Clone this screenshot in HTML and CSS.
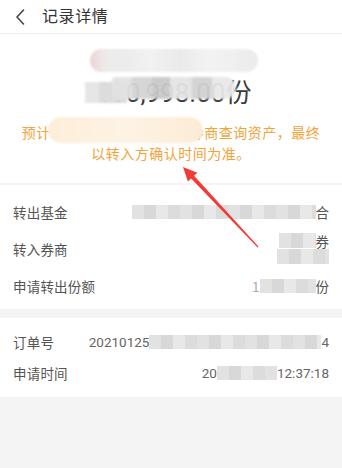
FILE: index.html
```html
<!DOCTYPE html>
<html lang="zh-CN">
<head>
    <meta charset="UTF-8">
    <meta name="viewport" content="width=device-width, initial-scale=1.0">
    <title>记录详情</title>
    <link rel="stylesheet" href="styles.css">
</head>
<body>
    <div class="page">
        <div class="header">
            <svg class="back" width="10" height="16" viewBox="0 0 10 16">
                <path d="M8.5 1 L2 8 L8.5 15" fill="none" stroke="#444" stroke-width="1.6" stroke-linecap="round" stroke-linejoin="round"/>
            </svg>
            <span class="title">记录详情</span>
        </div>

        <div class="hero">
            <div class="amount">100,998.00份</div>
            <div class="notice">预计3个交易日后可在转入券商查询资产，最终<br>以转入方确认时间为准。</div>

            <!-- masked areas -->
            <div class="mask mask-top"></div>
            <div class="mask mask-lead"></div>
            <div class="mask mask-amount"></div>
            <div class="mask mask-notice"></div>
        </div>

        <div class="card first">
            <div class="row">
                <span class="label">转出基金</span>
                <span class="value"><span class="mosaic w-fund"></span>合</span>
            </div>
            <div class="row">
                <span class="label">转入券商</span>
                <span class="value two-line">
                    <span class="line"><span class="mosaic w-broker"></span>券</span>
                    <span class="line"><span class="mosaic w-broker2"></span></span>
                </span>
            </div>
            <div class="row">
                <span class="label">申请转出份额</span>
                <span class="value"><span class="faint">1</span><span class="mosaic w-share"></span>份</span>
            </div>
        </div>

        <div class="card second">
            <div class="row short">
                <span class="label">订单号</span>
                <span class="value num">20210125<span class="mosaic w-order"></span>4</span>
            </div>
            <div class="row short">
                <span class="label">申请时间</span>
                <span class="value num">20<span class="mosaic w-time"></span>12:37:18</span>
            </div>
        </div>

        <!-- red annotation arrow -->
        <svg class="arrow" width="342" height="468" viewBox="0 0 342 468">
            <polygon points="183,167 197.3,172.8 194.1,175.8 258.4,246.6 257.6,247.4 191.1,178.6 187.9,181.6" fill="#f23b36"/>
        </svg>
    </div>
</body>
</html>
```

FILE: styles.css
```css
body {
    margin: 0;
    background-color: #f4f4f4;
    font-family: "Noto Sans CJK SC", "Noto Sans", sans-serif;
    color: #333;
}

.page {
    position: relative;
    width: 342px;
    min-height: 468px;
}

.header {
    height: 33px;
    display: flex;
    align-items: center;
    padding-left: 15px;
    background-color: white;
    border-bottom: 1px solid #ececec;
}

.back {
    margin-right: 17px;
}

.title {
    font-size: 16px;
    letter-spacing: 0.6px;
    color: #333;
    margin-top: -4px;
}

.hero {
    position: relative;
    background-color: white;
    padding: 42px 0 19px;
    margin-bottom: 2px;
    text-align: center;
}

.amount {
    font-family: Roboto, "Noto Sans CJK SC", sans-serif;
    font-size: 26px;
    line-height: 34px;
    color: #3a3a3a;
    margin-bottom: 12px;
    padding-left: 6px;
}

.notice {
    font-size: 14px;
    letter-spacing: 0.5px;
    line-height: 21px;
    color: #f2a33a;
}

.mask {
    position: absolute;
    filter: blur(1px);
}

.mask-top {
    left: 90px;
    top: 15px;
    width: 168px;
    height: 23px;
    border-radius: 12px;
    background: linear-gradient(90deg, #ebd3d3 0, #eeeaea 14px, #ededed 40px, #f1f1f1 60px, #eaeaea 90px, #f3f3f3 120px, #ebebeb 168px);
}

.mask-lead {
    left: 85px;
    top: 48px;
    width: 42px;
    height: 21px;
    background: linear-gradient(90deg, #e6e6e6 0 14px, #dcdcdc 14px 42px);
}

.mask-amount {
    left: 112px;
    top: 43px;
    width: 124px;
    height: 22px;
    border-radius: 4px 12px 12px 4px;
    opacity: 0.95;
    background: linear-gradient(90deg, #e2e2e2 0 20px, #d4d4d4 20px 40px, #c9c9c9 40px 58px, #e4e4e4 58px 80px, #d2d2d2 80px 100px, #e8e8e8 100px 124px);
}

.mask-notice {
    left: 48px;
    top: 83px;
    width: 155px;
    height: 26px;
    border-radius: 13px;
    background: linear-gradient(90deg, #fdeed9, #fdf3e4 50%, #fcecd6);
}

.card {
    background-color: white;
}

.card.first {
    padding: 8px 0 5px;
    margin-bottom: 9px;
}

.card.second {
    padding: 8px 0 9px;
}

.row {
    height: 37px;
    display: flex;
    align-items: center;
    justify-content: space-between;
    padding: 0 13px;
}

.row.short {
    height: 31px;
}

.label {
    font-size: 13.5px;
    letter-spacing: 0.2px;
    color: #555;
}

.value {
    display: flex;
    align-items: center;
    font-size: 13.5px;
    color: #555;
}

.value.num {
    font-family: Roboto, "Noto Sans CJK SC", sans-serif;
    color: #666;
}

.value.two-line {
    flex-direction: column;
    align-items: flex-end;
}

.line {
    display: flex;
    align-items: center;
    height: 16px;
}

.faint {
    color: #aaa;
}

.mosaic {
    display: inline-block;
    height: 14px;
    filter: blur(0.6px);
    background: repeating-linear-gradient(90deg, #e2e2e2 0 12px, #d8d8d8 12px 24px, #e8e8e8 24px 36px, #dcdcdc 36px 48px);
}

.w-fund { width: 184px; }
.w-broker { width: 37px; height: 15px; }
.w-broker2 { width: 52px; height: 15px; }
.w-share { width: 56px; }
.w-order { width: 172px; }
.w-time { width: 60px; }

.arrow {
    position: absolute;
    top: 0;
    left: 0;
    pointer-events: none;
}
```
